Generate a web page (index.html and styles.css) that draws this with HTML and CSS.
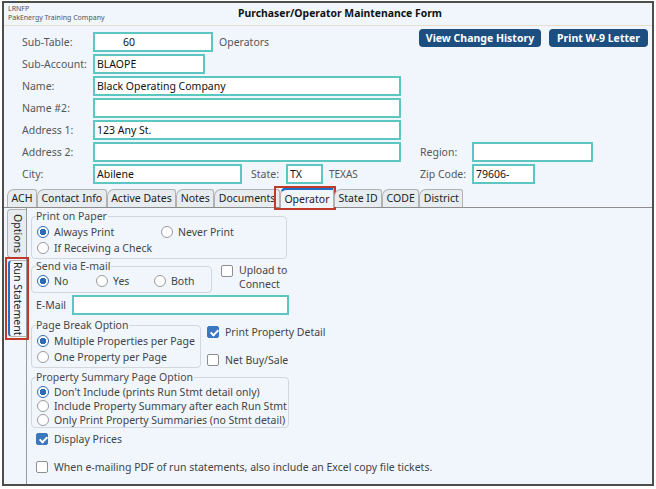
FILE: index.html
```html
<!doctype html>
<html>
<head>
  <title>Purchaser/Operator Maintenance Form</title>
  <link rel="stylesheet" href="styles.css">
</head>
<body>
  <div class="window">
    <div class="header">
      <div class="company">
        <div>LRNFP</div>
        <div>PakEnergy Training Company</div>
      </div>
      <div class="title">Purchaser/Operator Maintenance Form</div>
    </div>

    <div class="form">
      <div class="row">
        <span class="lbl">Sub-Table:</span>
        <span class="input w-subtable center">60</span>
        <span class="after">Operators</span>
        <div class="buttons">
          <span class="btn btn-history">View Change History</span>
          <span class="btn btn-w9">Print W-9 Letter</span>
        </div>
      </div>
      <div class="row">
        <span class="lbl">Sub-Account:</span>
        <span class="input w-subacct">BLAOPE</span>
      </div>
      <div class="row">
        <span class="lbl">Name:</span>
        <span class="input w-wide">Black Operating Company</span>
      </div>
      <div class="row">
        <span class="lbl">Name #2:</span>
        <span class="input w-wide"></span>
      </div>
      <div class="row">
        <span class="lbl">Address 1:</span>
        <span class="input w-wide">123 Any St.</span>
      </div>
      <div class="row">
        <span class="lbl">Address 2:</span>
        <span class="input w-wide"></span>
        <span class="lbl-right">Region:</span>
        <span class="input w-region"></span>
      </div>
      <div class="row">
        <span class="lbl">City:</span>
        <span class="input w-city">Abilene</span>
        <span class="lbl-state">State:</span>
        <span class="input w-state">TX</span>
        <span class="state-name">TEXAS</span>
        <span class="lbl-zip">Zip Code:</span>
        <span class="input w-zip">79606-</span>
      </div>
    </div>

    <div class="tabs">
      <span class="tab">ACH</span>
      <span class="tab">Contact Info</span>
      <span class="tab">Active Dates</span>
      <span class="tab">Notes</span>
      <span class="tab">Documents</span>
      <span class="tab active marked">Operator</span>
      <span class="tab">State ID</span>
      <span class="tab">CODE</span>
      <span class="tab">District</span>
    </div>

    <div class="body">
      <div class="side-tabs">
        <span class="vtab">Options</span>
        <span class="vtab active marked">Run Statement</span>
      </div>

      <div class="panel">
        <fieldset class="group g-paper">
          <legend>Print on Paper</legend>
          <div class="opts">
            <span class="opt o-always"><span class="radio on"></span>Always Print</span>
            <span class="opt"><span class="radio"></span>Never Print</span>
          </div>
          <div class="opts">
            <span class="opt"><span class="radio"></span>If Receiving a Check</span>
          </div>
        </fieldset>

        <div class="send-row">
          <fieldset class="group g-email">
            <legend>Send via E-mail</legend>
            <div class="opts">
              <span class="opt o-no"><span class="radio on"></span>No</span>
              <span class="opt o-yes"><span class="radio"></span>Yes</span>
              <span class="opt"><span class="radio"></span>Both</span>
            </div>
          </fieldset>
          <div class="check upload"><span class="box"></span><span>Upload to<br>Connect</span></div>
        </div>

        <div class="email-row">
          <span class="lbl-email">E-Mail</span>
          <span class="input w-email"></span>
        </div>

        <div class="break-row">
          <fieldset class="group g-break">
            <legend>Page Break Option</legend>
            <div class="opts"><span class="opt"><span class="radio on"></span>Multiple Properties per Page</span></div>
            <div class="opts"><span class="opt"><span class="radio"></span>One Property per Page</span></div>
          </fieldset>
          <div class="break-checks">
            <div class="check"><span class="box on"></span>Print Property Detail</div>
            <div class="check net"><span class="box"></span>Net Buy/Sale</div>
          </div>
        </div>

        <fieldset class="group g-summary">
          <legend>Property Summary Page Option</legend>
          <div class="opts tight"><span class="opt"><span class="radio on"></span>Don't Include (prints Run Stmt detail only)</span></div>
          <div class="opts tight"><span class="opt"><span class="radio"></span>Include Property Summary after each Run Stmt</span></div>
          <div class="opts tight"><span class="opt"><span class="radio"></span>Only Print Property Summaries (no Stmt detail)</span></div>
        </fieldset>

        <div class="check prices"><span class="box on"></span>Display Prices</div>
        <div class="check excel"><span class="box"></span>When e-mailing PDF of run statements, also include an Excel copy file tickets.</div>
      </div>
    </div>
  </div>
</body>
</html>
```
FILE: styles.css
```css
html, body {
  margin: 0;
  padding: 0;
  background: #ffffff;
}

body {
  font-family: "Noto Sans", "Open Sans", sans-serif;
  font-size: 10.5px;
  color: #444;
}

.window {
  box-sizing: border-box;
  width: 652px;
  height: 485px;
  margin: 1px 0 0 2px;
  border: 2px solid #4e4e4e;
  background: #f0f6fc;
  overflow: hidden;
}

/* header */
.header {
  display: flex;
  height: 22px;
  border-bottom: 1px solid #e8dccd;
}
.company {
  width: 230px;
  padding: 1px 0 0 4px;
  font-size: 7px;
  line-height: 9px;
  color: #555;
}
.title {
  padding-top: 3px;
  font-size: 10.4px;
  font-weight: bold;
  color: #111;
}

/* top form */
.form {
  padding: 6px 4px 0 18px;
}
.row {
  display: flex;
  align-items: center;
  height: 20px;
  margin-bottom: 2px;
}
.lbl {
  width: 71px;
  font-size: 10.5px;
  color: #575757;
}
.input {
  box-sizing: border-box;
  height: 20px;
  padding: 0 2px;
  border: 2px solid #5cc7c1;
  background: #fff;
  color: #111;
  font-size: 10.5px;
  line-height: 16px;
  white-space: nowrap;
}
.input.center { padding-left: 28px; }
.w-subtable { width: 120px; }
.w-subacct { width: 112px; }
.w-wide { width: 308px; }
.w-region { width: 121px; }
.w-city { width: 149px; }
.w-state { width: 37px; }
.w-zip { width: 63px; }
.w-email { width: 217px; }

.after {
  margin-left: 6px;
  font-size: 10.5px;
  color: #575757;
}
.lbl-right {
  width: 52px;
  margin-left: 19px;
  font-size: 10.5px;
  color: #575757;
}
.lbl-state {
  width: 35px;
  margin-left: 9px;
  font-size: 10.5px;
  color: #575757;
}
.state-name {
  width: 91px;
  margin-left: 6px;
  font-size: 10px;
  color: #575757;
}
.lbl-zip {
  width: 52px;
  font-size: 10.5px;
  color: #575757;
}

.buttons {
  display: flex;
  gap: 8px;
  margin-left: auto;
  margin-top: -8px;
}
.btn {
  box-sizing: border-box;
  height: 18px;
  border-radius: 4px;
  background: #1c4e80;
  color: #fff;
  font-size: 10.5px;
  font-weight: bold;
  line-height: 18px;
  text-align: center;
}
.btn-history { width: 122px; }
.btn-w9 { width: 99px; }

/* horizontal tabs */
.tabs {
  display: flex;
  align-items: flex-end;
  height: 22px;
  margin-top: -1px;
  padding-left: 3px;
  border-bottom: 1px solid #8c8c8c;
}
.tab {
  position: relative;
  box-sizing: border-box;
  height: 18px;
  padding: 0 3.5px;
  border: 1px solid #b2b2b2;
  border-bottom: none;
  border-radius: 7px 3px 0 0;
  background: #e7ecf1;
  color: #222;
  font-size: 10.5px;
  line-height: 17px;
}
.tab.active {
  height: 21px;
  margin-bottom: -1px;
  border-top: 3px solid #1f6fc4;
  background: #f0f6fc;
  line-height: 18px;
}
.tab.marked::after {
  content: "";
  position: absolute;
  left: -7px;
  right: -3px;
  top: -4px;
  bottom: -2px;
  border: 2px solid #c0392b;
}

/* body */
.body {
  display: flex;
  height: 277px;
}
.side-tabs {
  display: flex;
  flex-direction: column;
  align-items: flex-end;
  width: 22px;
  border-right: 1px solid #9a9a9a;
}
.vtab {
  position: relative;
  box-sizing: border-box;
  width: 19px;
  margin-top: 1px;
  padding: 4px 0;
  border: 1px solid #b2b2b2;
  border-right: none;
  border-radius: 4px 0 0 4px;
  background: #e7ecf1;
  color: #222;
  font-size: 10.5px;
  line-height: 17px;
  writing-mode: vertical-rl;
}
.vtab.active {
  width: 18px;
  margin-top: 2px;
  padding: 1px 0;
  border-left: 2px solid #1f6fc4;
  background: #f0f6fc;
}
.vtab.marked::after {
  content: "";
  position: absolute;
  left: -5px;
  right: -3px;
  top: -4px;
  bottom: -4px;
  border: 2px solid #c0392b;
}

.panel {
  padding: 2px 0 0 4px;
  flex: 1;
}

.group {
  box-sizing: border-box;
  margin: 0;
  padding: 2px 0 0 5px;
  border: 1px solid #d3d7dc;
  border-radius: 4px;
}
.group legend {
  padding: 0 1px 0 0;
  margin-left: -1px;
  font-size: 10.5px;
  line-height: 12px;
  color: #4a4a4a;
}
.g-paper { width: 256px; height: 49px; }
.g-email { width: 181px; height: 33px; padding-top: 1px; }
.g-break { width: 170px; height: 49px; }
.g-summary { width: 258px; height: 57px; margin-top: 3px; padding-top: 2px; }

.opts {
  display: flex;
  line-height: 16px;
  height: 16px;
}
.opts.tight {
  line-height: 14px;
  height: 14px;
}
.opt {
  display: flex;
  align-items: center;
  white-space: nowrap;
  font-size: 10.5px;
  color: #444;
}
.o-always { width: 124px; }
.o-no { width: 59px; }
.o-yes { width: 58px; }

.radio {
  box-sizing: border-box;
  width: 12px;
  height: 12px;
  margin-right: 5px;
  border: 1px solid #9b9b9b;
  border-radius: 50%;
  background: #fff;
}
.radio.on {
  border: 1.5px solid #2e6bb3;
  background: radial-gradient(circle, #2e6bb3 0 3px, #fff 3.5px);
}

.check {
  display: flex;
  align-items: center;
  font-size: 10.5px;
  line-height: 16px;
  color: #444;
  white-space: nowrap;
}
.box {
  position: relative;
  box-sizing: border-box;
  width: 12px;
  height: 12px;
  margin-right: 6px;
  border: 1px solid #8f8f8f;
  border-radius: 2px;
  background: #fff;
  flex: none;
}
.box.on {
  border-color: #3a77bf;
  background: #3a77bf;
}
.box.on::after {
  content: "";
  position: absolute;
  left: 3.5px;
  top: 1px;
  width: 3px;
  height: 6px;
  border: solid #fff;
  border-width: 0 2px 2px 0;
  transform: rotate(45deg);
}

.send-row {
  display: flex;
  margin-top: 1px;
}
.upload {
  align-items: flex-start;
  margin: 3px 0 0 9px;
  line-height: 14px;
}
.upload .box {
  margin-top: 2px;
}

.email-row {
  display: flex;
  align-items: center;
  height: 20px;
  margin-top: 2px;
  padding-left: 5px;
}
.lbl-email {
  width: 36px;
  font-size: 10.5px;
  color: #444;
}

.break-row {
  display: flex;
  margin-top: 4px;
}
.break-checks {
  margin: 5px 0 0 6px;
}
.break-checks .net {
  margin-top: 12px;
}

.prices {
  margin: 3px 0 0 5px;
}
.excel {
  margin: 12px 0 0 5px;
}
```
